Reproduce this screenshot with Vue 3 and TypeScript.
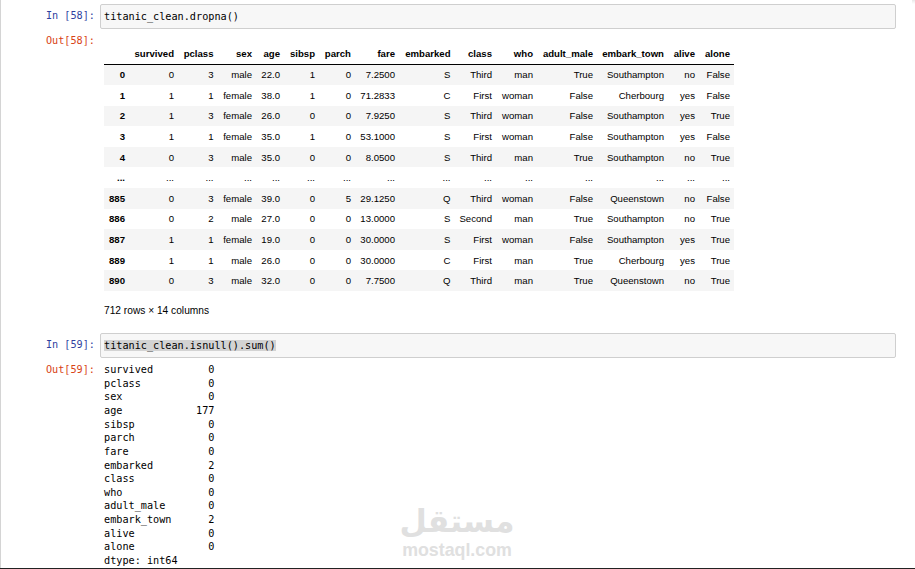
<template>
  <div class="page">
    <div class="notebook">
      <div class="cell input-cell first">
        <div class="prompt in">In&nbsp;[58]:</div>
        <div class="code-box"><span>titanic_clean.dropna()</span></div>
      </div>

      <div class="cell output-cell table-output">
        <div class="prompt out">Out[58]:</div>
        <div class="output-body">
          <table class="dataframe">
            <colgroup>
              <col v-for="(w, i) in colWidths" :key="i" :style="{ width: w + 'px' }" />
            </colgroup>
            <thead>
              <tr>
                <th></th>
                <th v-for="col in columns" :key="col">{{ col }}</th>
              </tr>
            </thead>
            <tbody>
              <tr v-for="row in rows" :key="row[0]">
                <th>{{ row[0] }}</th>
                <td v-for="(val, i) in row.slice(1)" :key="i">{{ val }}</td>
              </tr>
            </tbody>
          </table>
          <p class="shape">712 rows × 14 columns</p>
        </div>
      </div>

      <div class="cell input-cell">
        <div class="prompt in">In&nbsp;[59]:</div>
        <div class="code-box"><span class="selected">titanic_clean.isnull().sum()</span></div>
      </div>

      <div class="cell output-cell">
        <div class="prompt out">Out[59]:</div>
        <pre class="series">{{ seriesText }}</pre>
      </div>
    </div>

    <div class="watermark">
      <div class="wm-ar" dir="rtl">مستقل</div>
      <div class="wm-en">mostaql.com</div>
    </div>
  </div>
</template>

<script setup lang="ts">
const columns = [
  'survived', 'pclass', 'sex', 'age', 'sibsp', 'parch', 'fare', 'embarked',
  'class', 'who', 'adult_male', 'embark_town', 'alive', 'alone',
]

const colWidths = [25, 49, 39.5, 38.5, 28, 35, 36, 44, 55.5, 41.5, 41, 60, 71, 31, 35]

const rows: string[][] = [
  ['0', '0', '3', 'male', '22.0', '1', '0', '7.2500', 'S', 'Third', 'man', 'True', 'Southampton', 'no', 'False'],
  ['1', '1', '1', 'female', '38.0', '1', '0', '71.2833', 'C', 'First', 'woman', 'False', 'Cherbourg', 'yes', 'False'],
  ['2', '1', '3', 'female', '26.0', '0', '0', '7.9250', 'S', 'Third', 'woman', 'False', 'Southampton', 'yes', 'True'],
  ['3', '1', '1', 'female', '35.0', '1', '0', '53.1000', 'S', 'First', 'woman', 'False', 'Southampton', 'yes', 'False'],
  ['4', '0', '3', 'male', '35.0', '0', '0', '8.0500', 'S', 'Third', 'man', 'True', 'Southampton', 'no', 'True'],
  ['...', '...', '...', '...', '...', '...', '...', '...', '...', '...', '...', '...', '...', '...', '...'],
  ['885', '0', '3', 'female', '39.0', '0', '5', '29.1250', 'Q', 'Third', 'woman', 'False', 'Queenstown', 'no', 'False'],
  ['886', '0', '2', 'male', '27.0', '0', '0', '13.0000', 'S', 'Second', 'man', 'True', 'Southampton', 'no', 'True'],
  ['887', '1', '1', 'female', '19.0', '0', '0', '30.0000', 'S', 'First', 'woman', 'False', 'Southampton', 'yes', 'True'],
  ['889', '1', '1', 'male', '26.0', '0', '0', '30.0000', 'C', 'First', 'man', 'True', 'Cherbourg', 'yes', 'True'],
  ['890', '0', '3', 'male', '32.0', '0', '0', '7.7500', 'Q', 'Third', 'man', 'True', 'Queenstown', 'no', 'True'],
]

const seriesText = `survived         0
pclass           0
sex              0
age            177
sibsp            0
parch            0
fare             0
embarked         2
class            0
who              0
adult_male       0
embark_town      2
alive            0
alone            0
dtype: int64`
</script>

<style>
html,
body {
  margin: 0;
  background: #fff;
  overflow: hidden;
}
</style>

<style scoped>
.page {
  position: relative;
  width: 915px;
  height: 569px;
  overflow: hidden;
  box-sizing: border-box;
  border-bottom: 1px solid #222;
  background: linear-gradient(to bottom, #e8e8e8, #fff 4px);
}

.notebook {
  height: 100%;
  margin-right: 3px;
  padding: 4px 16px 0 0;
  box-sizing: border-box;
  box-shadow: inset 1px 0 0 #d4d4d4;
  background: #fff;
}

.cell {
  display: flex;
}

.prompt {
  width: 95px;
  flex: none;
  box-sizing: border-box;
  text-align: right;
  font-family: "DejaVu Sans Mono", monospace;
  font-size: 10.2px;
  line-height: 14px;
}

.prompt.in {
  color: #303f9f;
  padding-top: 5px;
}

.prompt.out {
  color: #d84315;
}

.code-box {
  flex: 1;
  margin-left: 5px;
  height: 25px;
  box-sizing: border-box;
  padding: 5px 3px 0;
  background: #f7f7f7;
  border: 1px solid #cfcfcf;
  border-radius: 2px;
  font-family: "DejaVu Sans Mono", monospace;
  font-size: 10.2px;
  line-height: 14px;
  color: #000;
  white-space: pre;
}

.selected {
  background: #d3d3d3;
}

.output-cell {
  margin-top: 5px;
}

.output-body {
  margin-left: 9px;
}

.dataframe {
  table-layout: fixed;
  width: 630px;
  border-collapse: collapse;
  margin-top: 11px;
  font-family: "Liberation Sans", Arial, sans-serif;
  font-size: 9.6px;
  color: #000;
}

.dataframe th,
.dataframe td {
  padding: 0 4px 0 0;
  height: 20.6px;
  text-align: right;
  white-space: nowrap;
  vertical-align: middle;
}

.dataframe thead th {
  border-bottom: 1px solid #000;
  height: 19px;
  padding-bottom: 2px;
  box-sizing: border-box;
}

.dataframe tbody tr:nth-child(odd) {
  background: #f5f5f5;
}

.shape {
  margin: 13px 0 0;
  font-family: "Liberation Sans", Arial, sans-serif;
  font-size: 10.2px;
  line-height: 14px;
  color: #000;
}

.input-cell:not(.first) {
  margin-top: 15px;
}

.series {
  margin: 0 0 0 9px;
  font-family: "DejaVu Sans Mono", monospace;
  font-size: 10.2px;
  line-height: 13.64px;
  color: #000;
}

.watermark {
  position: absolute;
  left: 392px;
  top: 503px;
  width: 130px;
  text-align: center;
  color: #e0e0e0;
}

.wm-ar {
  font-family: "DejaVu Sans", sans-serif;
  font-weight: 700;
  font-size: 31.5px;
  line-height: 36.5px;
}

.wm-en {
  font-family: "Liberation Sans", Arial, sans-serif;
  font-weight: 700;
  font-size: 17.8px;
  line-height: 21px;
}
</style>
